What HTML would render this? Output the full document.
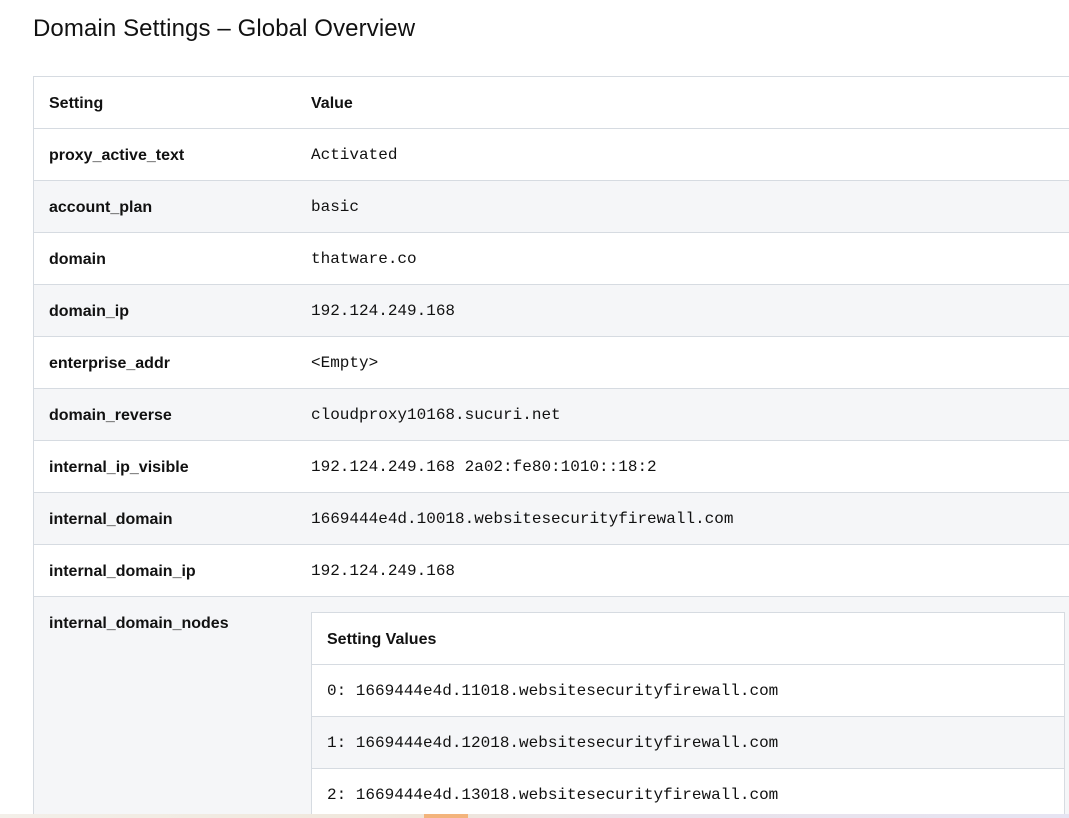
<!DOCTYPE html>
<html style="overflow:hidden;height:818px"><head><style>
html,body{margin:0;background:#fff;width:1069px;height:818px;overflow:hidden;}
body{position:relative;font-family:"Liberation Sans",sans-serif;color:#111;}
h1{position:absolute;left:33px;top:15px;margin:0;font-size:24px;font-weight:normal;letter-spacing:0.1px;}
.t{position:absolute;left:33px;top:76px;width:1100px;border:1px solid #d6dbe1;border-right:none;border-bottom:none;}
.r{height:51px;border-bottom:1px solid #d6dbe1;position:relative;}
.g{background:#f5f6f8;}
.k{position:absolute;left:15px;top:18px;font-weight:bold;font-size:16px;}
.v{position:absolute;left:277px;top:17px;font-family:"Liberation Mono",monospace;font-size:16px;}
.in{position:absolute;left:277px;top:15px;width:752px;border:1px solid #d6dbe1;background:#fff;}
.in .r .v{left:15px;}
.in .r .k{left:15px;}
.bot{position:absolute;left:0;top:814px;width:1069px;height:4px;background:linear-gradient(90deg,#f3efe9,#efe6da 40%,#e9e2ea 60%,#e6e4f2);z-index:5;}
.bot i{position:absolute;left:424px;width:44px;height:4px;background:#f3b47c;}
</style></head><body>
<h1>Domain Settings – Global Overview</h1>
<div class="t">
<div class="r"><span class="k">Setting</span><span class="v" style="font-family:'Liberation Sans',sans-serif;font-weight:bold;top:18px">Value</span></div>
<div class="r"><span class="k">proxy_active_text</span><span class="v">Activated</span></div>
<div class="r g"><span class="k">account_plan</span><span class="v">basic</span></div>
<div class="r"><span class="k">domain</span><span class="v">thatware.co</span></div>
<div class="r g"><span class="k">domain_ip</span><span class="v">192.124.249.168</span></div>
<div class="r"><span class="k">enterprise_addr</span><span class="v">&lt;Empty&gt;</span></div>
<div class="r g"><span class="k">domain_reverse</span><span class="v">cloudproxy10168.sucuri.net</span></div>
<div class="r"><span class="k">internal_ip_visible</span><span class="v">192.124.249.168 2a02:fe80:1010::18:2</span></div>
<div class="r g"><span class="k">internal_domain</span><span class="v">1669444e4d.10018.websitesecurityfirewall.com</span></div>
<div class="r"><span class="k">internal_domain_ip</span><span class="v">192.124.249.168</span></div>
<div class="r g" style="height:220px;border-bottom:none"><span class="k">internal_domain_nodes</span>
<div class="in">
<div class="r"><span class="k">Setting Values</span></div>
<div class="r"><span class="v">0: 1669444e4d.11018.websitesecurityfirewall.com</span></div>
<div class="r g"><span class="v">1: 1669444e4d.12018.websitesecurityfirewall.com</span></div>
<div class="r"><span class="v">2: 1669444e4d.13018.websitesecurityfirewall.com</span></div>
</div></div>
</div>
<div class="bot"><i></i></div>
</body></html>
